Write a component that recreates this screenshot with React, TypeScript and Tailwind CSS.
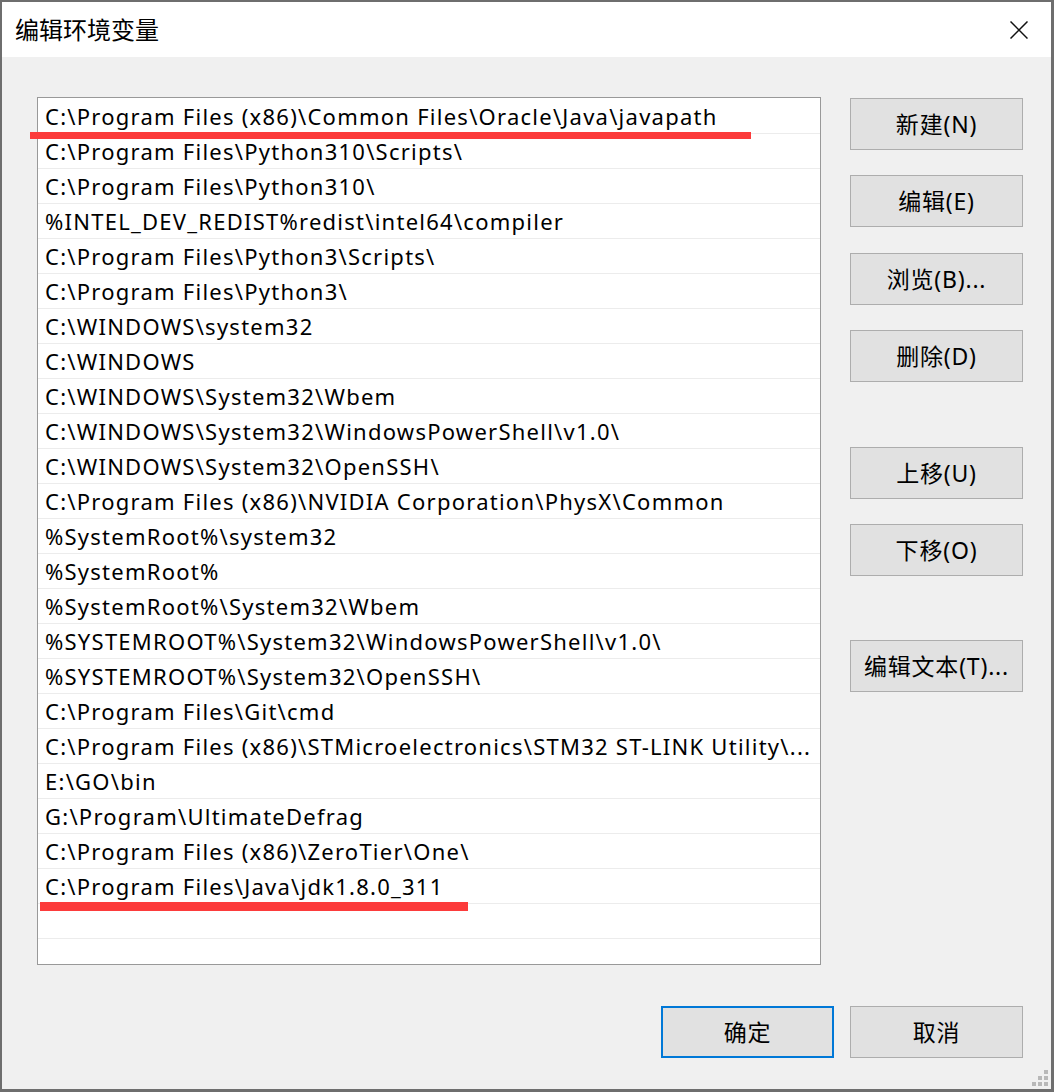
const paths = [
  'C:\\Program Files (x86)\\Common Files\\Oracle\\Java\\javapath',
  'C:\\Program Files\\Python310\\Scripts\\',
  'C:\\Program Files\\Python310\\',
  '%INTEL_DEV_REDIST%redist\\intel64\\compiler',
  'C:\\Program Files\\Python3\\Scripts\\',
  'C:\\Program Files\\Python3\\',
  'C:\\WINDOWS\\system32',
  'C:\\WINDOWS',
  'C:\\WINDOWS\\System32\\Wbem',
  'C:\\WINDOWS\\System32\\WindowsPowerShell\\v1.0\\',
  'C:\\WINDOWS\\System32\\OpenSSH\\',
  'C:\\Program Files (x86)\\NVIDIA Corporation\\PhysX\\Common',
  '%SystemRoot%\\system32',
  '%SystemRoot%',
  '%SystemRoot%\\System32\\Wbem',
  '%SYSTEMROOT%\\System32\\WindowsPowerShell\\v1.0\\',
  '%SYSTEMROOT%\\System32\\OpenSSH\\',
  'C:\\Program Files\\Git\\cmd',
  'C:\\Program Files (x86)\\STMicroelectronics\\STM32 ST-LINK Utility\\...',
  'E:\\GO\\bin',
  'G:\\Program\\UltimateDefrag',
  'C:\\Program Files (x86)\\ZeroTier\\One\\',
  'C:\\Program Files\\Java\\jdk1.8.0_311',
  '',
  '',
];

function DlgButton({ label, className = '', focused = false }: { label: string; className?: string; focused?: boolean }) {
  return (
    <button
      className={
        'w-[173px] h-[52px] bg-[#e1e1e1] text-[23px] tracking-[0.8px] text-black flex items-center justify-center ' +
        (focused ? 'border-2 border-[#0078d7] ' : 'border border-[#adadad] ') +
        className
      }
    >
      {label}
    </button>
  );
}

export default function App() {
  return (
    <div
      className="relative w-[1054px] h-[1092px] flex flex-col bg-[#f0f0f0] border-[#6e6e6e] border-l-2 border-t-2 border-r-[3px] border-b-[3px] overflow-hidden"
      style={{ fontFamily: '"Noto Sans", "Noto Sans CJK SC", sans-serif' }}
    >
      {/* title bar */}
      <div className="h-[55px] bg-white flex items-center justify-between pl-[13px] pr-[23px] shrink-0">
        <span className="text-[24px] text-black leading-none">编辑环境变量</span>
        <svg width="18" height="18" viewBox="0 0 18 18">
          <path d="M0.5 0.5 L17.5 17.5 M17.5 0.5 L0.5 17.5" stroke="#111" strokeWidth="1.5" />
        </svg>
      </div>

      <div className="flex pl-[35px] pt-[40px]">
        {/* path list */}
        <div className="w-[784px] h-[868px] bg-white border border-[#999] pt-[1px] overflow-hidden">
          {paths.map((p, i) => (
            <div
              key={i}
              className="h-[35px] border-b border-[#ececec] pl-[7px] pr-[6px] pt-[2px] text-[22px] tracking-[1.25px] leading-[31px] text-black whitespace-nowrap overflow-hidden"
            >
              {p}
            </div>
          ))}
        </div>

        {/* action buttons */}
        <div className="flex flex-col ml-[29px]">
          <DlgButton label="新建(N)" className="mt-[1px]" />
          <DlgButton label="编辑(E)" className="mt-[25px]" />
          <DlgButton label="浏览(B)..." className="mt-[26px]" />
          <DlgButton label="删除(D)" className="mt-[25px]" />
          <DlgButton label="上移(U)" className="mt-[65px]" />
          <DlgButton label="下移(O)" className="mt-[25px]" />
          <DlgButton label="编辑文本(T)..." className="mt-[64px]" />
        </div>
      </div>

      <div className="flex justify-end gap-[16px] pr-[28px] mt-[41px]">
        <DlgButton label="确定" focused />
        <DlgButton label="取消" />
      </div>

      {/* red marker strokes */}
      <div className="absolute left-[28px] top-[130px] w-[721px] h-[7px] bg-[#fc3b3b]" />
      <div className="absolute left-[38px] top-[900px] w-[428px] h-[9px] bg-[#fc3b3b]" />

      {/* resize grip */}
      <svg className="absolute left-[1030px] top-[1068px]" width="18" height="18" viewBox="0 0 18 18">
        <g fill="#b8b8b8">
          <rect x="12" y="0" width="4" height="4" />
          <rect x="6" y="6" width="4" height="4" />
          <rect x="12" y="6" width="4" height="4" />
          <rect x="0" y="12" width="4" height="4" />
          <rect x="6" y="12" width="4" height="4" />
          <rect x="12" y="12" width="4" height="4" />
        </g>
      </svg>
    </div>
  );
}
